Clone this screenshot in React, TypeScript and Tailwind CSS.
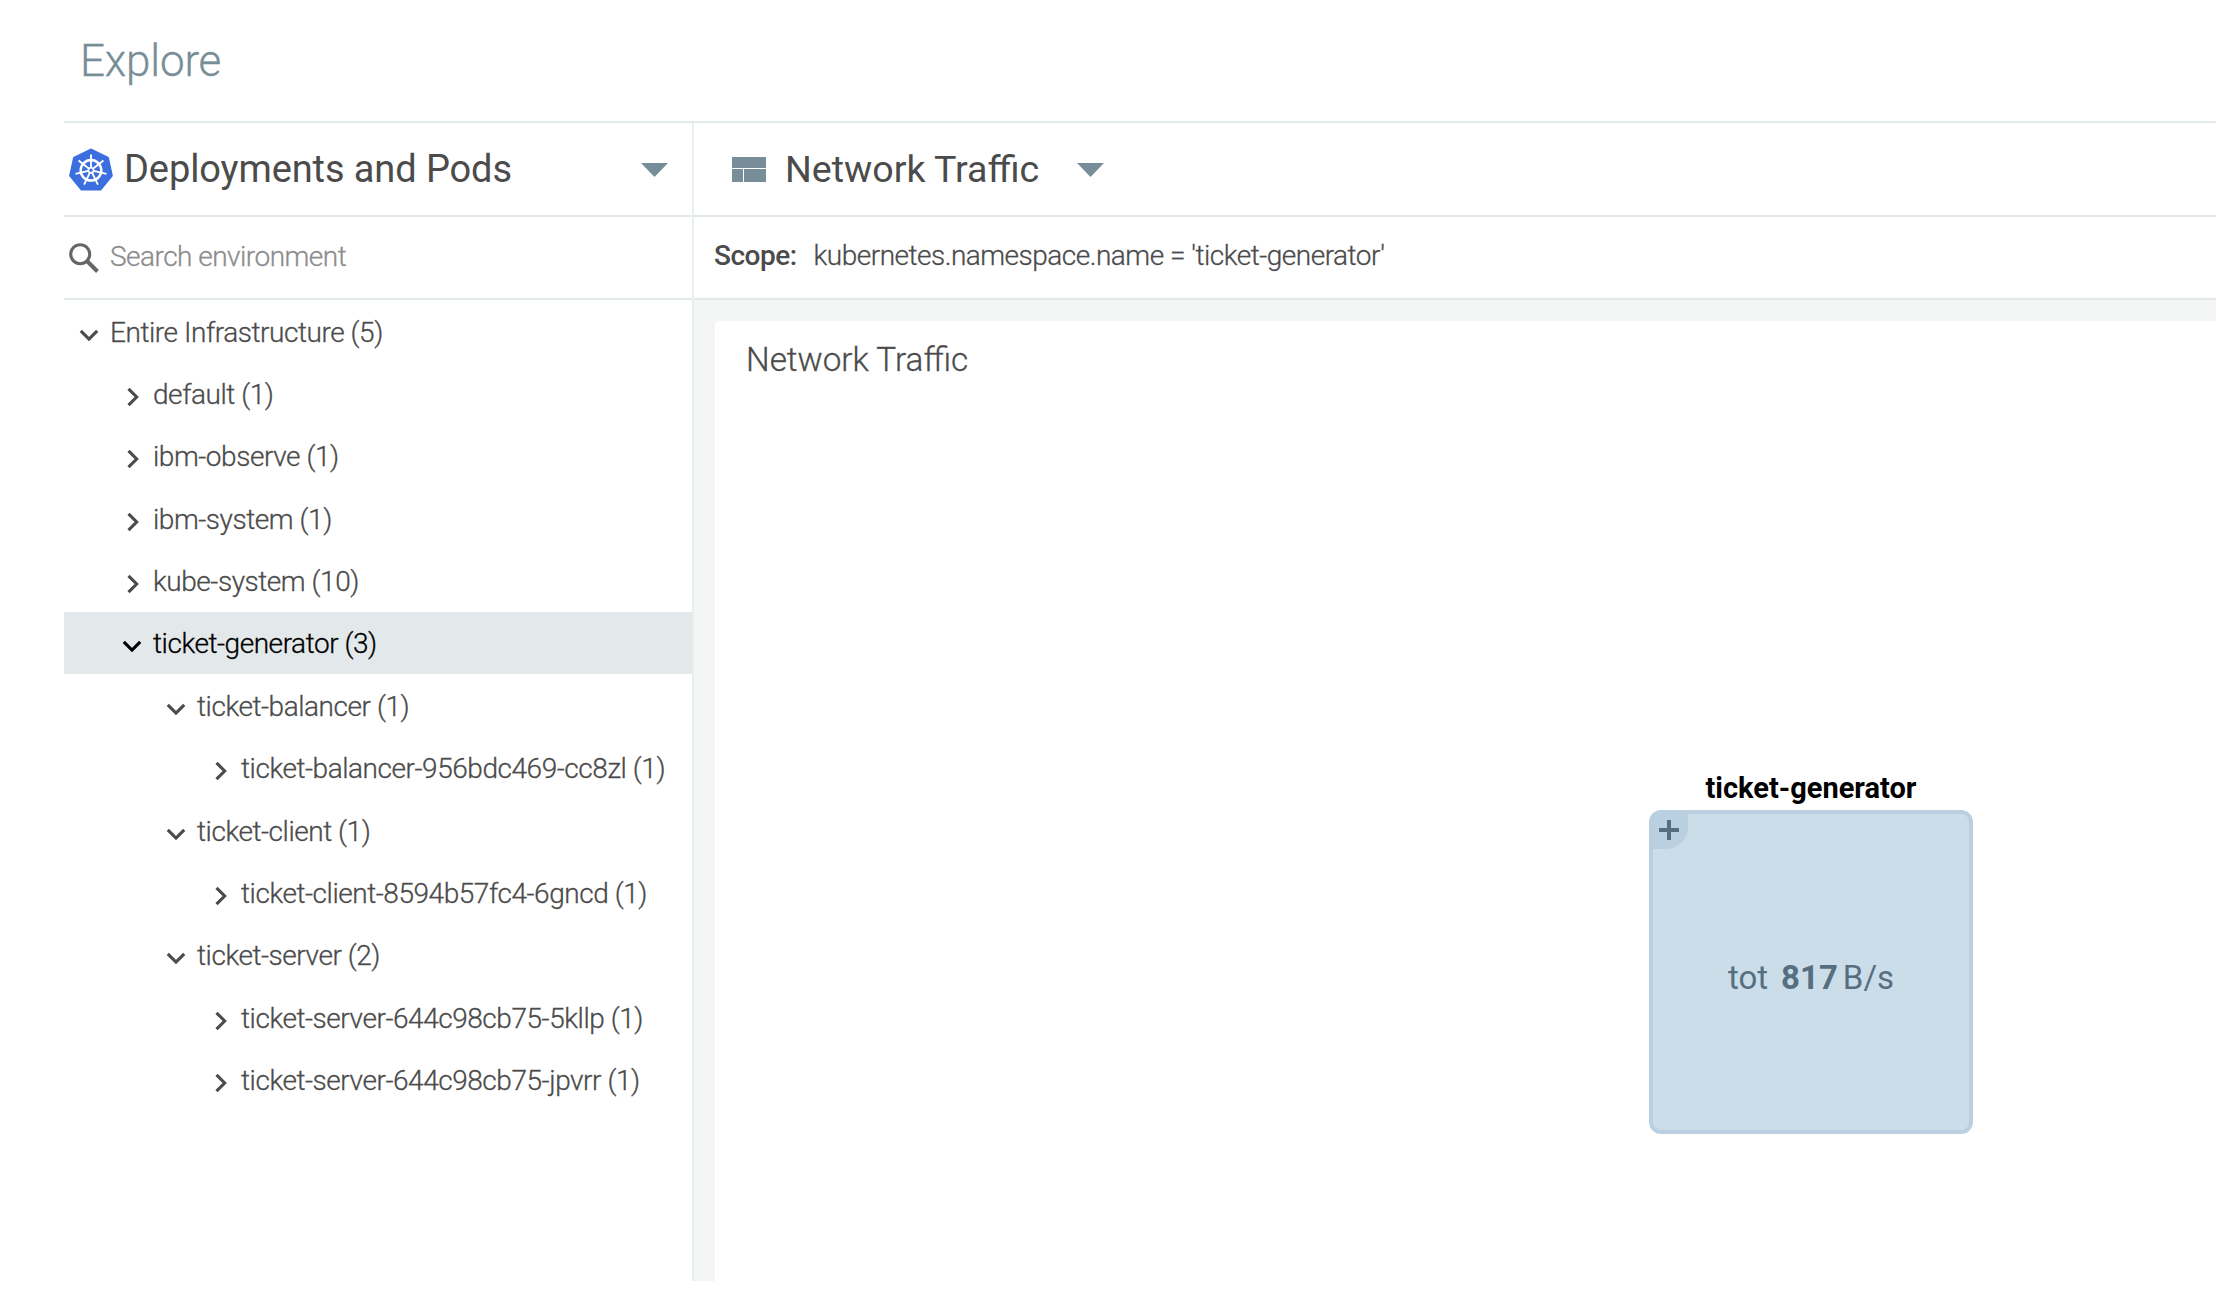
type TreeNode = { label: string; depth: number; open: boolean; selected?: boolean };

const TREE: TreeNode[] = [
  { label: 'Entire Infrastructure (5)', depth: 0, open: true },
  { label: 'default (1)', depth: 1, open: false },
  { label: 'ibm-observe (1)', depth: 1, open: false },
  { label: 'ibm-system (1)', depth: 1, open: false },
  { label: 'kube-system (10)', depth: 1, open: false },
  { label: 'ticket-generator (3)', depth: 1, open: true, selected: true },
  { label: 'ticket-balancer (1)', depth: 2, open: true },
  { label: 'ticket-balancer-956bdc469-cc8zl (1)', depth: 3, open: false },
  { label: 'ticket-client (1)', depth: 2, open: true },
  { label: 'ticket-client-8594b57fc4-6gncd (1)', depth: 3, open: false },
  { label: 'ticket-server (2)', depth: 2, open: true },
  { label: 'ticket-server-644c98cb75-5kllp (1)', depth: 3, open: false },
  { label: 'ticket-server-644c98cb75-jpvrr (1)', depth: 3, open: false },
];

const INDENT = ['pl-[11px]', 'pl-[54px]', 'pl-[98px]', 'pl-[142px]'];

const SPOKES = [0, 1, 2, 3, 4, 5, 6].map((i) => (i * 360) / 7);

function KubernetesLogo() {
  return (
    <svg viewBox="0 0 44 43" className="h-[43px] w-[44px] shrink-0">
      <path
        d="M22 2 L38.5 10 L42.3 27.6 L31.3 41 L12.7 41 L1.7 27.6 L5.5 10 Z"
        fill="#3b6fdf"
        stroke="#3b6fdf"
        strokeWidth="3"
        strokeLinejoin="round"
      />
      <g stroke="#ffffff" fill="none">
        <circle cx="22" cy="22.3" r="10.3" strokeWidth="2.5" />
        {SPOKES.map((angle) => (
          <path key={angle} d="M22 19.5 V6.4" strokeWidth="1.9" transform={`rotate(${angle} 22 22.3)`} />
        ))}
        <circle cx="22" cy="22.3" r="2.6" strokeWidth="1.6" />
      </g>
    </svg>
  );
}

function Chevron({ open }: { open: boolean }) {
  return (
    <svg viewBox="0 0 28 28" className="mt-[7px] h-7 w-7 shrink-0" fill="none" stroke="currentColor" strokeWidth="3.1">
      {open ? <path d="M5.8 9.8 L14 18 L22.2 9.8" /> : <path d="M10.5 5.8 L18.7 14 L10.5 22.2" />}
    </svg>
  );
}

function Caret() {
  return (
    <svg viewBox="0 0 27 14" className="mt-px h-[14px] w-[27px] shrink-0" fill="#778d98">
      <path d="M0 0 H27 L13.5 14 Z" />
    </svg>
  );
}

function Sidebar() {
  return (
    <aside className="flex w-[630px] shrink-0 flex-col border-r-2 border-[#e9eeef]">
      <div className="flex h-[94px] items-center border-b-2 border-[#e2e9ea] pl-[5px] pr-[24px]">
        <KubernetesLogo />
        <span className="mb-px ml-[11px] text-[38px] leading-[44px] tracking-[-0.1px] text-[#4b4b4b]">
          Deployments and Pods
        </span>
        <span className="ml-auto">
          <Caret />
        </span>
      </div>
      <div className="flex h-[83px] items-center border-b-2 border-[#e2e9ea] pl-[5px]">
        <svg viewBox="0 0 30 30" className="h-[30px] w-[30px] shrink-0" fill="none" stroke="#666666" strokeWidth="3.1">
          <circle cx="11.2" cy="11.2" r="9.5" />
          <path d="M18 18 L28.5 28.5" strokeWidth="4" />
        </svg>
        <span className="mb-[2px] ml-[11px] text-[28px] font-light leading-[34px] tracking-[-0.52px] text-[#8c8c8c] [-webkit-text-stroke:0.3px]">
          Search environment
        </span>
      </div>
      <nav>
        {TREE.map((node) => (
          <div
            key={node.label}
            className={`flex h-[62.36px] items-center ${INDENT[node.depth]} ${
              node.selected ? 'bg-[#e3e8ea] text-black' : 'text-[#4b4b4b]'
            }`}
          >
            <Chevron open={node.open} />
            <span className="ml-[7px] mt-[3px] whitespace-nowrap text-[28px] font-light leading-[34px] tracking-[-0.45px] [-webkit-text-stroke:0.3px]">
              {node.label}
            </span>
          </div>
        ))}
      </nav>
    </aside>
  );
}

function TrafficNode() {
  return (
    <div className="absolute left-[934px] top-[449px] flex w-[324px] flex-col items-center">
      <span className="mb-[4px] whitespace-nowrap text-[29px] font-bold leading-[36px] text-black">ticket-generator</span>
      <div className="relative flex h-[324px] w-[324px] items-center justify-center rounded-[12px] border-4 border-[#bacfe0] bg-[#ccddea]">
        <div className="absolute -left-px -top-px flex h-[36px] w-[36px] items-center justify-center rounded-br-[22px] rounded-tl-[8px] bg-[#bacfe0]">
          <svg viewBox="0 0 20 20" className="-ml-[3px] -mt-[3px] h-5 w-5" stroke="#566f80" strokeWidth="4">
            <path d="M10 0 V20 M0 10 H20" />
          </svg>
        </div>
        <div className="mt-[11px] flex items-baseline text-[33px] leading-[40px] text-[#566f80]">
          <span>tot</span>
          <span className="ml-[13px] font-bold">817</span>
          <span className="ml-[5px]">B/s</span>
        </div>
      </div>
    </div>
  );
}

function Dashboard() {
  return (
    <main className="flex min-w-0 flex-1 flex-col">
      <div className="flex h-[94px] items-center border-b-2 border-[#e2e9ea] pl-[38px]">
        <div className="grid h-[25px] w-[34px] shrink-0 grid-cols-[11px_22px] grid-rows-[11.5px_12.5px] gap-px">
          <div className="col-span-2 bg-[#778d98]" />
          <div className="bg-[#778d98]" />
          <div className="bg-[#778d98]" />
        </div>
        <span className="mb-px ml-[19px] mr-[38px] text-[37.6px] leading-[44px] text-[#4b4b4b]">Network Traffic</span>
        <Caret />
      </div>
      <div className="flex h-[83px] items-center border-b-2 border-[#e2e9ea] pb-[4px] pl-[20px] text-[28px] leading-[34px] tracking-[-0.5px] text-[#4b4b4b]">
        <span className="font-medium">Scope:</span>
        <span className="ml-[17px] font-light [-webkit-text-stroke:0.3px]">
          kubernetes.namespace.name = 'ticket-generator'
        </span>
      </div>
      <div className="flex flex-1 bg-[#f4f6f6] pl-[21px] pt-[21px]">
        <section className="relative flex-1 rounded-tl-[4px] bg-white pl-[31px] pt-[19px]">
          <h2 className="text-[33.3px] font-light leading-[40px] text-[#4b4b4b] [-webkit-text-stroke:0.3px]">
            Network Traffic
          </h2>
          <TrafficNode />
        </section>
      </div>
    </main>
  );
}

export default function App() {
  return (
    <div className="flex h-[1308px] w-[2216px] flex-col overflow-hidden bg-white pb-[27px] pl-[64px] font-['Roboto',sans-serif]">
      <header className="flex h-[123px] shrink-0 items-start border-b-2 border-[#e2e9ea] pl-[16px] pt-[35px]">
        <h1 className="text-[44px] font-light leading-[52px] tracking-[-0.2px] text-[#778d98] [-webkit-text-stroke:0.3px]">
          Explore
        </h1>
      </header>
      <div className="flex min-h-0 flex-1">
        <Sidebar />
        <Dashboard />
      </div>
    </div>
  );
}
